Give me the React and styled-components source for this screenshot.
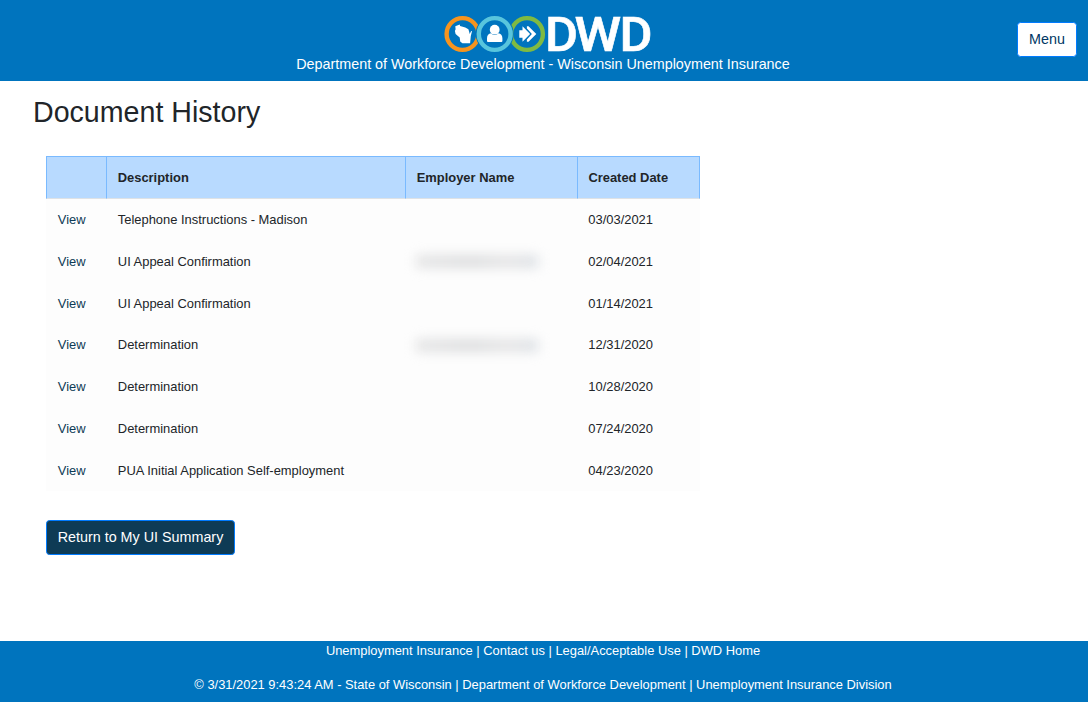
import React from 'react';
import styled, { createGlobalStyle } from 'styled-components';

const GlobalStyle = createGlobalStyle`
  * {
    box-sizing: border-box;
  }

  body {
    margin: 0;
    background: #fff;
    color: #212529;
    font-family: 'Liberation Sans', Arial, sans-serif;
    font-size: 14.33px;
    line-height: 1.5;
  }
`;

const Page = styled.div`
  display: flex;
  flex-direction: column;
  height: 702px;
  overflow: hidden;
`;

const Header = styled.header`
  display: grid;
  grid-template-columns: 1fr auto 1fr;
  height: 81px;
  padding-right: 11px;
  background: #0074be;
  color: #fff;
`;

const Brand = styled.div`
  grid-column: 2;
  display: flex;
  flex-direction: column;
  align-items: center;
  padding: 12px 0 0 9px;
`;

const Logo = styled.svg`
  display: block;
  width: 210px;
  height: 41px;
  margin: 0 0 1px 10px;
  overflow: visible;
`;

const LogoLetter = styled.text`
  fill: #fff;
  stroke: #fff;
  stroke-width: 0.6px;
  font-family: Roboto, sans-serif;
  font-size: 49px;
  font-weight: 500;
`;

const MenuButton = styled.button`
  justify-self: end;
  width: 60px;
  height: 35px;
  margin-top: 22px;
  padding: 0;
  border: 1px solid #007bff;
  border-radius: 3.6px;
  background: #fff;
  color: #003764;
  font: inherit;
`;

const Main = styled.main`
  flex: 1;
  padding: 14px 33px 0;
`;

const Title = styled.h1`
  margin: 0;
  font-size: 28.6px;
  font-weight: 400;
  line-height: 34px;
`;

const Content = styled.div`
  padding: 27px 0 0 13px;
`;

const Table = styled.table`
  width: 654px;
  table-layout: fixed;
  border-collapse: separate;
  border-spacing: 0;
  font-size: 12.93px;
`;

const HeadCell = styled.th`
  width: ${({ $width }) => $width}px;
  height: 43px;
  padding: 0 0 0 10.7px;
  border: solid #7abaff;
  border-width: 1px 0 0 1px;
  border-bottom: 1px solid #dee2e6;
  background: #b8daff;
  text-align: left;

  &:last-child {
    padding-left: 10.4px;
    border-right: 1px solid #7abaff;
  }
`;

const Cell = styled.td`
  height: 41.77px;
  padding: 0 0 0 11.8px;
  background: #fdfdfd;

  &:last-child {
    padding-left: 11.3px;
  }
`;

const ViewLink = styled.a`
  color: #0e3b55;
`;

const Redacted = styled.span`
  display: block;
  width: 122px;
  height: 13px;
  margin-left: -1px;
  background: linear-gradient(90deg, #e4e4e5, #dcddde 45%, #e4e4e5 75%, #dce0e5);
  filter: blur(6px);
`;

const ReturnButton = styled.button`
  display: block;
  width: 189px;
  height: 35px;
  margin-top: 29px;
  padding: 0;
  border: 1px solid #007bff;
  border-radius: 3.6px;
  background: #0e3b55;
  color: #fff;
  font: inherit;
`;

const Footer = styled.footer`
  height: 61px;
  padding-right: 2px;
  background: #0074be;
  color: #fff;
  font-size: 12.9px;
  line-height: 20px;
  text-align: center;
`;

const Copyright = styled.div`
  margin-top: 14px;
`;

const COLUMNS = [
  { label: '', width: 60 },
  { label: 'Description', width: 299 },
  { label: 'Employer Name', width: 172 },
  { label: 'Created Date', width: 123 },
];

const DOCUMENTS = [
  { description: 'Telephone Instructions - Madison', date: '03/03/2021' },
  { description: 'UI Appeal Confirmation', date: '02/04/2021', hasEmployer: true },
  { description: 'UI Appeal Confirmation', date: '01/14/2021' },
  { description: 'Determination', date: '12/31/2020', hasEmployer: true },
  { description: 'Determination', date: '10/28/2020' },
  { description: 'Determination', date: '07/24/2020' },
  { description: 'PUA Initial Application Self-employment', date: '04/23/2020' },
];

const LOGO_LETTERS = [
  { letter: 'D', x: 545, width: 33 },
  { letter: 'W', x: 574.6, width: 46.6 },
  { letter: 'D', x: 619.4, width: 33 },
];

const DwdLogo = () => (
  <Logo viewBox="443 12 210 41" role="img" aria-label="DWD">
    <g fill="none" strokeWidth="4.4">
      <circle cx="462.5" cy="34" r="15.9" stroke="#f7941e" />
      <circle cx="527" cy="34" r="15.9" stroke="#7fba42" />
      <circle cx="494.7" cy="34" r="18.4" stroke="#0074be" strokeWidth="1.2" />
      <circle cx="494.7" cy="34" r="15.9" stroke="#58c5dd" />
    </g>
    <g fill="#fff">
      <path d="M455.3 26.2l4.4-1.7.4 1.6 5.2 1.5 3.1 1.7.9 3 .3 1.7 1.6-3 .8.3-1.2 4.6-.7 7.4h-7.7l-2.2-1.7-.5-4-4.1-3.5-.7-3.2.7-1.6z" />
      <circle cx="494.7" cy="29.7" r="4.9" />
      <path d="M487 41v-2.8c0-3 1.6-4.7 4-4.9 2 2.1 5.4 2.1 7.4 0 2.4.2 4 1.9 4 4.9V41q0 1-1 1h-13.4q-1 0-1-1z" />
      <path d="M519.3 30.2h3.2v-4l7.6 7.8-7.6 7.8v-4h-3.2z" />
      <path d="M526.9 26.2h1.6l7.8 7.8-7.8 7.8h-1.6v-2.2l5-5.6-5-5.6z" />
    </g>
    {LOGO_LETTERS.map(({ letter, x, width }) => (
      <LogoLetter key={x} x={x} y="51" textLength={width} lengthAdjust="spacingAndGlyphs">
        {letter}
      </LogoLetter>
    ))}
  </Logo>
);

const DocumentRow = ({ description, date, hasEmployer }) => (
  <tr>
    <Cell>
      <ViewLink>View</ViewLink>
    </Cell>
    <Cell>{description}</Cell>
    <Cell>{hasEmployer && <Redacted />}</Cell>
    <Cell>{date}</Cell>
  </tr>
);

const App = () => (
  <Page>
    <GlobalStyle />
    <Header>
      <Brand>
        <DwdLogo />
        <span>Department of Workforce Development - Wisconsin Unemployment Insurance</span>
      </Brand>
      <MenuButton>Menu</MenuButton>
    </Header>
    <Main>
      <Title>Document History</Title>
      <Content>
        <Table>
          <thead>
            <tr>
              {COLUMNS.map(({ label, width }) => (
                <HeadCell key={label} $width={width}>
                  {label}
                </HeadCell>
              ))}
            </tr>
          </thead>
          <tbody>
            {DOCUMENTS.map(document => (
              <DocumentRow key={document.date} {...document} />
            ))}
          </tbody>
        </Table>
        <ReturnButton>Return to My UI Summary</ReturnButton>
      </Content>
    </Main>
    <Footer>
      <div>Unemployment Insurance | Contact us | Legal/Acceptable Use | DWD Home</div>
      <Copyright>
        © 3/31/2021 9:43:24 AM - State of Wisconsin | Department of Workforce Development |
        Unemployment Insurance Division
      </Copyright>
    </Footer>
  </Page>
);

export default App;
